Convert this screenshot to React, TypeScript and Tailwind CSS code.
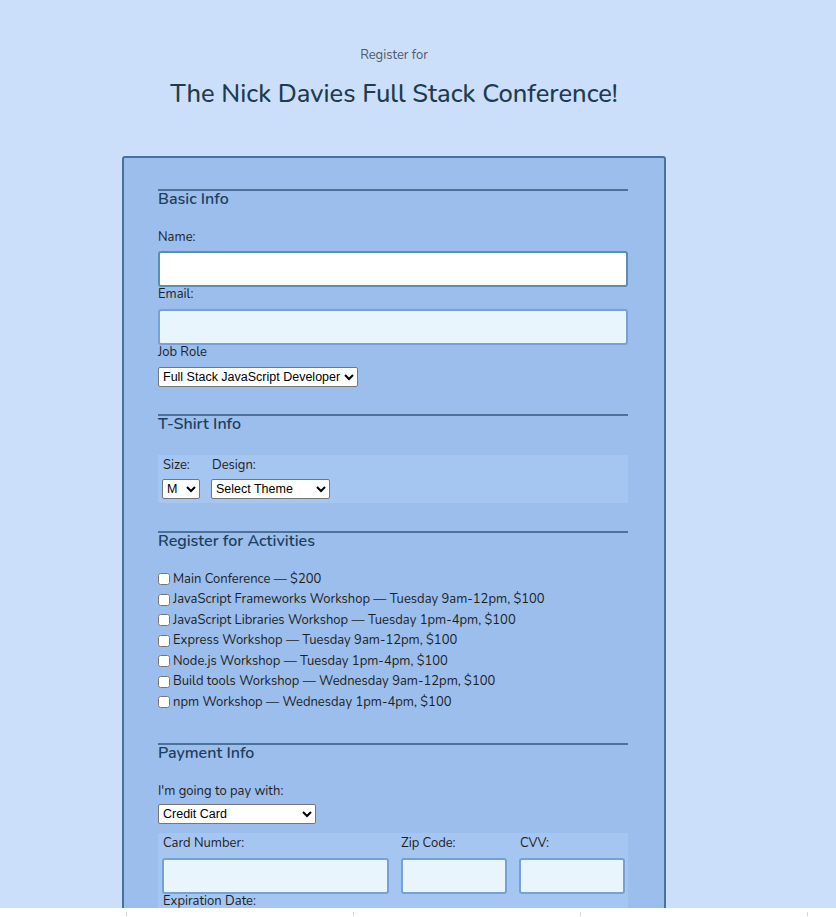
import { useState } from "react"

const activities = [
  "Main Conference — $200",
  "JavaScript Frameworks Workshop — Tuesday 9am-12pm, $100",
  "JavaScript Libraries Workshop — Tuesday 1pm-4pm, $100",
  "Express Workshop — Tuesday 9am-12pm, $100",
  "Node.js Workshop — Tuesday 1pm-4pm, $100",
  "Build tools Workshop — Wednesday 9am-12pm, $100",
  "npm Workshop — Wednesday 1pm-4pm, $100",
]

const selectCls =
  "h-[20px] bg-white border border-[#767676] rounded-[2px] text-[12.5px] text-black font-['Liberation_Sans',Arial,sans-serif]"

const lightInput =
  "block h-[36px] bg-[#e8f5fc] border-2 border-[#76a0d6] rounded-[3px] outline-none"

const labelCls = "block text-[13px] leading-[14px] text-[#1e1e1e]"
const headCls = "text-[16px] leading-4 font-semibold text-[#1d3f5e]"

export default function App() {
  const [checked, setChecked] = useState<boolean[]>(activities.map(() => false))

  return (
    <div className="h-[917px] overflow-hidden bg-white font-['Nunito',Lato,'Noto_Sans',sans-serif]">
      <div className="h-[908px] overflow-hidden bg-[#cbdffa]">
        <div className="w-[788px]">
          {/* header */}
          <header className="pt-[47px] text-center">
            <p className="text-[13px] leading-4 text-[#4d5b69]">Register for</p>
            <h1 className="mt-[15px] text-[25.5px] leading-[32px] font-medium text-[#1f3b4e]">
              The Nick Davies Full Stack Conference!
            </h1>
          </header>

          <form className="ml-[122px] mt-[46px] w-[544px] border-2 border-[#46729c] rounded-[3px] bg-[#9bbeec] pl-[34px] pr-[36px] pt-[31px] pb-10">
            {/* basic info */}
            <section className="border-t-2 border-[#4b7299]">
              <h2 className={headCls}>Basic Info</h2>

              <label className={labelCls + " mt-[23px]"}>Name:</label>
              <input
                type="text"
                className="block mt-[7px] w-full h-[36px] bg-white border-2 border-[#5d8db1] rounded-[3px] outline-none"
              />
              <label className={labelCls}>Email:</label>
              <input type="email" className={lightInput + " mt-[8px] w-full"} />
              <label className={labelCls}>Job Role</label>
              <select className={selectCls + " mt-[8px] w-[200px]"}>
                <option>Full Stack JavaScript Developer</option>
              </select>
            </section>

            {/* t-shirt */}
            <section className="mt-[26px] border-t-2 border-[#4b7299]">
              <h2 className={headCls}>T-Shirt Info</h2>
              <div className="mt-[23px] bg-[#a5c6f0] pl-[4px] pt-[3px] pb-[3px] flex gap-[11px]">
                <div>
                  <label className={labelCls + " pl-[1px]"}>Size:</label>
                  <select className={selectCls + " mt-[7px] w-[38px]"}>
                    <option>M</option>
                  </select>
                </div>
                <div>
                  <label className={labelCls + " pl-[1px]"}>Design:</label>
                  <select className={selectCls + " mt-[7px] w-[119px]"}>
                    <option>Select Theme</option>
                  </select>
                </div>
              </div>
            </section>

            {/* activities */}
            <section className="mt-[28px] border-t-2 border-[#4b7299]">
              <h2 className={headCls}>Register for Activities</h2>
              <div className="mt-[20px]">
                {activities.map((a, i) => (
                  <label key={a} className="flex items-center h-[20.5px] text-[13px] text-[#1e1e1e]">
                    <input
                      type="checkbox"
                      className="m-0 mr-[3px] w-[12px] h-[12px]"
                      checked={checked[i]}
                      onChange={() => setChecked(checked.map((c, j) => (j === i ? !c : c)))}
                    />
                    {a}
                  </label>
                ))}
              </div>
            </section>

            {/* payment */}
            <section className="mt-[30px] border-t-2 border-[#4b7299]">
              <h2 className={headCls}>Payment Info</h2>
              <label className={labelCls + " mt-[23px]"}>I'm going to pay with:</label>
              <select className={selectCls + " mt-[6px] w-[158px]"}>
                <option>Credit Card</option>
              </select>

              <div className="mt-[8px] bg-[#a5c6f0] px-[4px] pt-[3px] pb-[6px]">
                <div className="flex gap-[12px]">
                  <div>
                    <label className={labelCls + " pl-[1px]"}>Card Number:</label>
                    <input type="text" className={lightInput + " mt-[8px] w-[227px]"} />
                  </div>
                  <div>
                    <label className={labelCls}>Zip Code:</label>
                    <input type="text" className={lightInput + " mt-[8px] w-[106px]"} />
                  </div>
                  <div>
                    <label className={labelCls + " pl-[1px]"}>CVV:</label>
                    <input type="text" className={lightInput + " mt-[8px] w-[106px]"} />
                  </div>
                </div>
                <label className={labelCls + " pl-[1px]"}>Expiration Date:</label>
              </div>
            </section>
          </form>
        </div>
      </div>

      {/* bottom strip */}
      <div className="h-[9px] flex gap-[226px] pl-[126px] pt-[4px]">
        <span className="w-px h-[4px] bg-[#d4d4d4]" />
        <span className="w-px h-[4px] bg-[#d4d4d4]" />
        <span className="w-px h-[4px] bg-[#d4d4d4]" />
        <span className="w-px h-[4px] bg-[#d4d4d4]" />
      </div>
    </div>
  )
}
